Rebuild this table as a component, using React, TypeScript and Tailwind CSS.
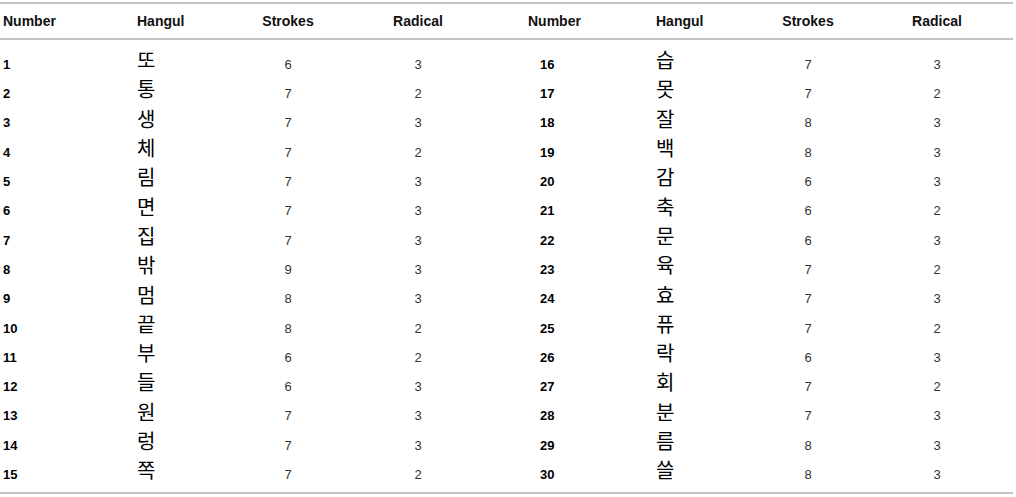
const rows: [number, string, number, number][] = [
  [1, '또', 6, 3],
  [2, '통', 7, 2],
  [3, '생', 7, 3],
  [4, '체', 7, 2],
  [5, '림', 7, 3],
  [6, '면', 7, 3],
  [7, '집', 7, 3],
  [8, '밖', 9, 3],
  [9, '멈', 8, 3],
  [10, '끝', 8, 2],
  [11, '부', 6, 2],
  [12, '들', 6, 3],
  [13, '원', 7, 3],
  [14, '렁', 7, 3],
  [15, '쪽', 7, 2],
  [16, '습', 7, 3],
  [17, '못', 7, 2],
  [18, '잘', 8, 3],
  [19, '백', 8, 3],
  [20, '감', 6, 3],
  [21, '축', 6, 2],
  [22, '문', 6, 3],
  [23, '육', 7, 2],
  [24, '효', 7, 3],
  [25, '퓨', 7, 2],
  [26, '락', 6, 3],
  [27, '회', 7, 2],
  [28, '분', 7, 3],
  [29, '름', 8, 3],
  [30, '쓸', 8, 3],
];

const grid = 'grid grid-cols-[137px_101px_100px_160px_158px_102px_100px_158px]';

function Cells({ row, right }: { row: [number, string, number, number]; right?: boolean }) {
  const [num, hangul, strokes, radical] = row;
  return (
    <>
      <div className={`flex items-center font-bold text-black text-[13px] ${right ? 'pl-[42px]' : 'pl-[3px]'}`}>{num}</div>
      <div className="flex items-center pb-[9px]">
        <span className="text-[20px] leading-none text-black" style={{ fontFamily: '"Noto Sans CJK KR", sans-serif' }}>
          {hangul}
        </span>
      </div>
      <div className="flex items-center justify-center text-[13px] text-[#333]">{strokes}</div>
      <div className="flex items-center justify-center text-[13px] text-[#333]">{radical}</div>
    </>
  );
}

export default function App() {
  const left = rows.slice(0, 15);
  const right = rows.slice(15);

  return (
    <div className="w-[1016px] h-[497px] bg-white pt-[2px] font-['Liberation_Sans',Arial,sans-serif]">
      <div className="h-[2px] w-[1013px] bg-[#c4c4c4]" />
      <div className={`${grid} h-[34px] items-center text-[14px] font-bold text-[#111]`}>
        <div className="pl-[3px]">Number</div>
        <div>Hangul</div>
        <div className="text-center">Strokes</div>
        <div className="text-center">Radical</div>
        <div className="pl-[30px]">Number</div>
        <div>Hangul</div>
        <div className="text-center">Strokes</div>
        <div className="text-center">Radical</div>
      </div>
      <div className="h-[2px] w-[1013px] bg-[#c4c4c4]" />
      <div className={`${grid} auto-rows-[29.3px] pt-[10px] pb-[3px]`}>
        {left.map((r, i) => (
          <div key={r[0]} className="contents">
            <Cells row={r} />
            <Cells row={right[i]} right />
          </div>
        ))}
      </div>
      <div className="h-[2px] w-[1013px] bg-[#c4c4c4]" />
    </div>
  );
}
